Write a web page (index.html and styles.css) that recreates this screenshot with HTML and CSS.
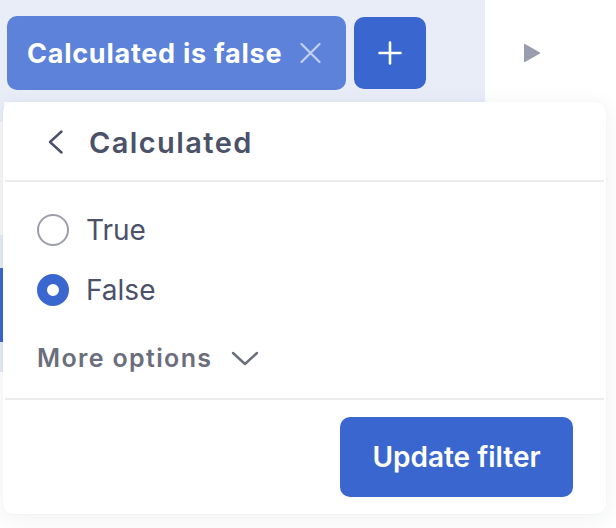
FILE: index.html
```html
<!DOCTYPE html>
<html>
<head>
<meta charset="utf-8">
<link rel="stylesheet" href="styles.css">
</head>
<body>
<div class="page">
  <div class="topbar">
    <div class="filters">
      <div class="pill">
        <span class="pill-text">Calculated is false</span>
        <svg class="pill-x" width="21" height="20" viewBox="0 0 21 20"><path d="M1.5 1 L19.5 19 M19.5 1 L1.5 19" stroke="#c4d0f0" stroke-width="2.2" stroke-linecap="round" fill="none"/></svg>
      </div>
      <div class="add">
        <svg width="24" height="24" viewBox="0 0 24 24"><path d="M12 1.5 V22.5 M1.5 12 H22.5" stroke="#fff" stroke-width="2.6" stroke-linecap="round" fill="none"/></svg>
      </div>
    </div>
    <div class="side">
      <svg width="18" height="20" viewBox="0 0 18 20"><path d="M1 1.5 Q1 0.5 2 1 L17 9.4 Q17.6 10 17 10.6 L2 19 Q1 19.5 1 18.5 Z" fill="#9a9dad"/></svg>
    </div>
  </div>
  <div class="under">
    <div class="strip s1"></div>
    <div class="strip s2"></div>
    <div class="strip s3"></div>
    <div class="strip s4"></div>
    <div class="strip s5"></div>
  </div>

  <div class="popup">
    <div class="header">
      <svg class="back" width="17" height="24" viewBox="0 0 17 24"><path d="M14.5 1.5 L3 12 L14.5 22.5" stroke="#4a5169" stroke-width="2.4" stroke-linecap="round" stroke-linejoin="round" fill="none"/></svg>
      <span class="title">Calculated</span>
    </div>
    <div class="divider"></div>
    <div class="body">
      <label class="option">
        <span class="radio"></span>
        <span class="label">True</span>
      </label>
      <label class="option">
        <span class="radio checked"></span>
        <span class="label">False</span>
      </label>
      <div class="more">
        <span>More options</span>
        <svg width="28" height="15" viewBox="0 0 28 15"><path d="M2 2 L14 13 L26 2" stroke="#6b6e7c" stroke-width="2.4" stroke-linecap="round" stroke-linejoin="round" fill="none"/></svg>
      </div>
    </div>
    <div class="divider"></div>
    <div class="footer">
      <button class="update">Update filter</button>
    </div>
  </div>
</div>
</body>
</html>
```

FILE: styles.css
```css
* { box-sizing: border-box; }
html, body { margin: 0; padding: 0; }
body {
  width: 616px;
  height: 528px;
  overflow: hidden;
  background: #f6f6f7;
  font-family: Inter, "Noto Sans", sans-serif;
}
.page {
  position: relative;
  width: 616px;
  height: 528px;
  background: #fff;
}
.topbar {
  display: flex;
  height: 102px;
}
.filters {
  width: 485px;
  background: #e9edf8;
  display: flex;
  align-items: flex-start;
  gap: 8px;
  padding: 16px 0 0 7px;
}
.pill {
  width: 339px;
  height: 74px;
  background: #5c82da;
  border-radius: 10px;
  display: flex;
  align-items: center;
  padding-left: 20px;
}
.pill-text {
  color: #fff;
  font-weight: 700;
  font-size: 27px;
  letter-spacing: 0.75px;
}
.pill-x {
  margin-left: 18px;
}
.add {
  width: 72px;
  height: 72px;
  margin-top: 1px;
  background: #3a66d0;
  border-radius: 10px;
  display: flex;
  align-items: center;
  justify-content: center;
}
.side {
  flex: 1;
  display: flex;
  justify-content: center;
  align-items: center;
  padding-right: 37px;
  padding-top: 4px;
}
.under {
  display: flex;
  flex-direction: column;
  width: 4px;
}
.strip { width: 4px; }
.s1 { height: 20px; background: #e9edf8; }
.s2 { height: 113px; background: #f7f7f9; }
.s3 { height: 33px; background: #e6eaf6; }
.s4 { height: 74px; background: #3a66d0; }
.s5 { height: 30px; background: #e6eaf6; }

.popup {
  position: absolute;
  left: 3px;
  top: 102px;
  width: 603px;
  height: 412px;
  background: #fff;
  border-radius: 10px;
  box-shadow: 0 4px 24px rgba(30, 40, 60, 0.07), 0 0 2px rgba(30, 40, 60, 0.06);
  display: flex;
  flex-direction: column;
}
.header {
  height: 78px;
  display: flex;
  align-items: center;
  padding-left: 44px;
  padding-top: 2px;
}
.back { margin-right: 25px; }
.title {
  font-size: 29px;
  font-weight: 600;
  color: #4a5169;
  letter-spacing: 1.4px;
}
.divider {
  height: 2px;
  background: #ececee;
  margin: 0 2px;
}
.body {
  display: flex;
  flex-direction: column;
  padding: 18px 0 0 34px;
  height: 216px;
}
.option {
  display: flex;
  align-items: center;
  height: 60px;
  gap: 17px;
}
.radio {
  width: 32px;
  height: 32px;
  border-radius: 50%;
  border: 2px solid #9c9eac;
  background: #fff;
}
.radio.checked {
  border: 10px solid #3a66d0;
  background: #fff;
}
.label {
  font-size: 28px;
  color: #4a5169;
  font-weight: 400;
}
.more {
  display: flex;
  align-items: center;
  height: 40px;
  margin-top: 18px;
  gap: 19px;
  font-size: 25px;
  font-weight: 600;
  color: #6b6e7c;
  letter-spacing: 1.35px;
}
.footer {
  flex: 1;
  display: flex;
  justify-content: flex-end;
  align-items: flex-start;
  padding: 17px 33px 0 0;
}
.update {
  width: 233px;
  height: 80px;
  border: none;
  border-radius: 10px;
  background: #3a66d0;
  color: #fff;
  font-family: Inter, "Noto Sans", sans-serif;
  font-size: 28px;
  font-weight: 600;
}
```
